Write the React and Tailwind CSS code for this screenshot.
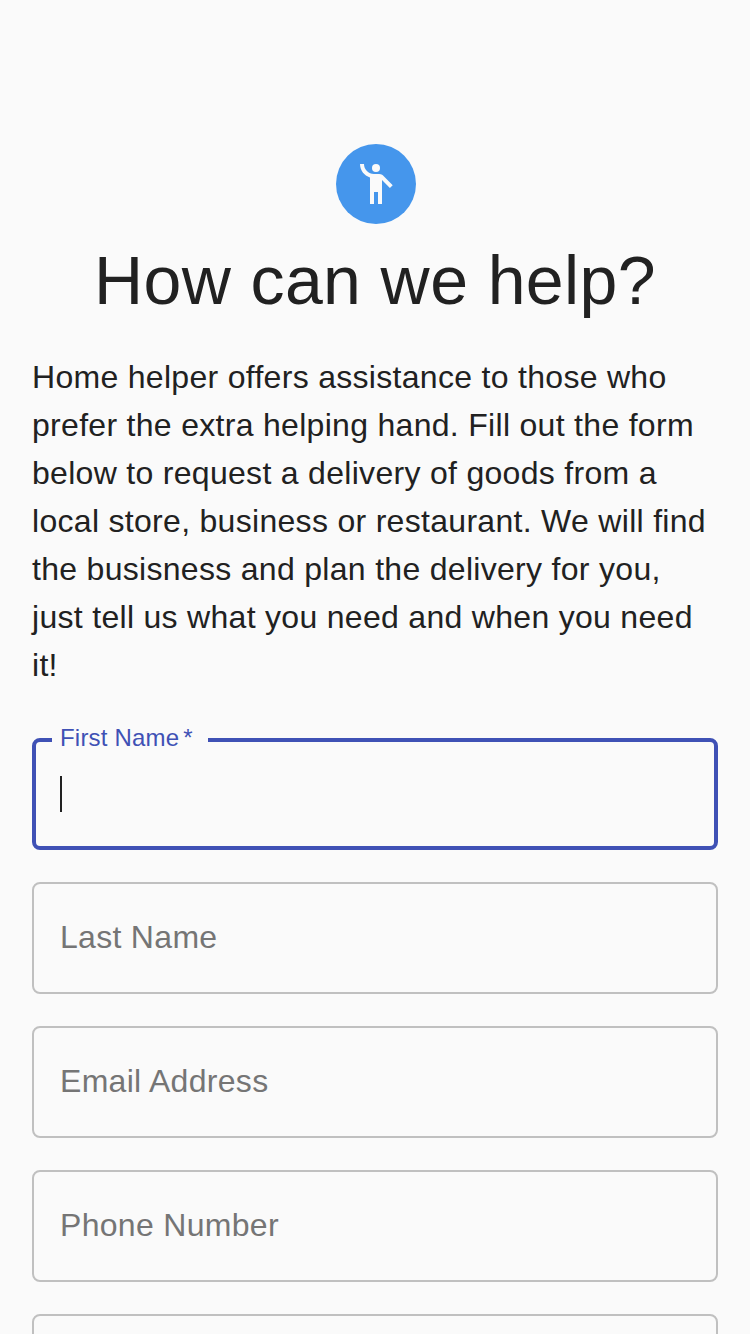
import React from "react";
import { MdEmojiPeople } from "react-icons/md";

const intro = [
  "Home helper offers assistance to those who",
  "prefer the extra helping hand. Fill out the form",
  "below to request a delivery of goods from a",
  "local store, business or restaurant. We will find",
  "the busisness and plan the delivery for you,",
  "just tell us what you need and when you need",
  "it!",
];

function Field({ label }) {
  return (
    <div className="flex h-28 shrink-0 items-center rounded-lg border-2 border-[#c0c0c0] px-[26px] pb-0.5 text-[32px] leading-[38px] tracking-[0.3px] text-[#757575]">
      {label}
    </div>
  );
}

export default function App() {
  return (
    <main className="flex h-[1334px] flex-col overflow-hidden bg-[#fafafa] px-8 pt-36 font-['Liberation_Sans',Arial,sans-serif] text-[#212121]">
      <div className="ml-0.5 flex size-20 shrink-0 items-center justify-center self-center rounded-full bg-[#4596ec]">
        <MdEmojiPeople className="size-12 text-[#fafafa]" />
      </div>
      <h1 className="mt-4 text-center text-[68px] leading-[80px] tracking-[0.4px] whitespace-nowrap">How can we help?</h1>
      <p className="mt-[33px] text-[32px] leading-[48px] tracking-[0.3px] whitespace-nowrap">
        {intro.map((line) => (
          <span key={line} className="block">{line}</span>
        ))}
      </p>
      <form className="mt-[49px] flex flex-col gap-8">
        <div className="relative flex h-28 shrink-0 items-center rounded-lg border-4 border-[#3f51b5] px-6">
          <label className="absolute -top-4 left-4 w-[156px] bg-[#fafafa] pl-2 text-[24px] leading-[24px] tracking-[0.2px] whitespace-nowrap text-[#3f51b5]">
            First Name<span className="ml-1">*</span>
          </label>
          <span className="h-9 w-0.5 bg-[#212121]" />
        </div>
        <Field label="Last Name" />
        <Field label="Email Address" />
        <Field label="Phone Number" />
        <Field label="" />
      </form>
    </main>
  );
}
